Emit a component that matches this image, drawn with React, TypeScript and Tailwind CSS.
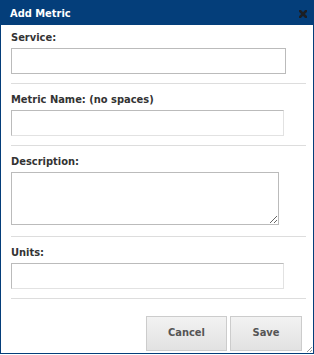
import React from "react";

const font = { fontFamily: '"DejaVu Sans Condensed", "DejaVu Sans", Verdana, sans-serif' };

function Label({ children }: { children: React.ReactNode }) {
  return (
    <div className="h-[14px] text-[11px] leading-[14px] font-bold text-[#333333]">{children}</div>
  );
}

function Sep({ className = "" }: { className?: string }) {
  return <div className={`h-px w-[295px] bg-[#dddddd] ${className}`} />;
}

export default function App() {
  return (
    <div
      className="relative w-[314px] h-[354px] border border-[#043e7a] bg-white flex flex-col"
      style={font}
    >
      <div className="h-[25px] -mt-px bg-[#043e7a] flex items-center justify-between pl-[9px] pr-[6px] shrink-0">
        <span className="text-white font-bold text-[11px] leading-none mt-[1px]">Add Metric</span>
        <svg width="8" height="8" viewBox="0 0 8 8" className="mt-[2px]">
          <path d="M1 1 L7 7 M7 1 L1 7" stroke="#1c1f24" strokeWidth="2.6" strokeLinecap="square" />
        </svg>
      </div>
      <div className="flex flex-col pl-[10px] pt-[6px]">
        <Label>Service:</Label>
        <input className="mt-[3px] h-[26px] w-[275px] border border-[#bbbbbb] outline-none" />
        <Sep className="mt-[9px]" />
        <div className="mt-[9px]">
          <Label>Metric Name: (no spaces)</Label>
        </div>
        <input className="mt-[3px] h-[26px] w-[273px] border border-[#bbbbbb] border-r-[#e2e2e2] border-b-[#e2e2e2] outline-none" />
        <Sep className="mt-[9px]" />
        <div className="mt-[9px]">
          <Label>Description:</Label>
        </div>
        <textarea className="mt-[3px] h-[53px] w-[268px] border border-[#bbbbbb] outline-none block" />
        <Sep className="mt-[11px]" />
        <div className="mt-[9px]">
          <Label>Units:</Label>
        </div>
        <input className="mt-[3px] h-[26px] w-[273px] border border-[#bbbbbb] border-r-[#e2e2e2] border-b-[#e2e2e2] outline-none" />
        <Sep className="mt-[9px]" />
        <div className="mt-[17px] w-[291px] flex justify-end gap-[3px]">
          <button className="h-[35px] w-[81px] border border-[#cccccc] bg-gradient-to-b from-[#f2f2f2] to-[#e2e2e2] text-[11px] font-bold text-[#555555]">
            Cancel
          </button>
          <button className="h-[35px] w-[72px] border border-[#cccccc] bg-gradient-to-b from-[#f2f2f2] to-[#e2e2e2] text-[11px] font-bold text-[#555555]">
            Save
          </button>
        </div>
      </div>
      <svg width="6" height="6" viewBox="0 0 6 6" className="absolute right-[1px] bottom-[1px]">
        <path d="M6 1 L1 6 M6 4 L4 6" stroke="#9a9a9a" strokeWidth="1" />
      </svg>
    </div>
  );
}
